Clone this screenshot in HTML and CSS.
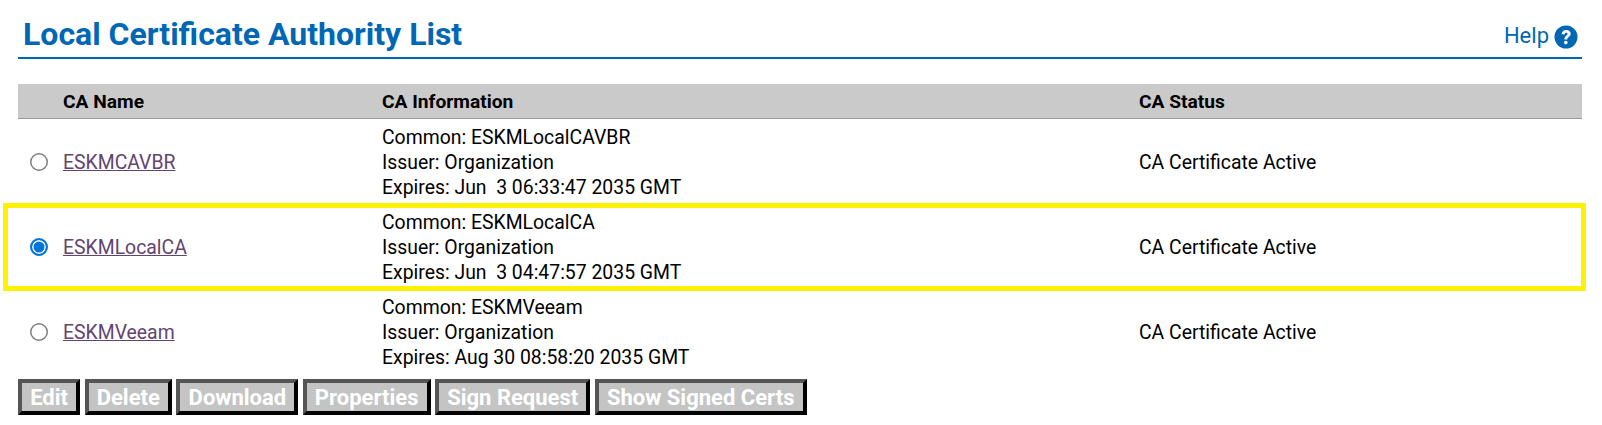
FILE: index.html
```html
<!DOCTYPE html>
<html lang="en">
<head>
    <meta charset="UTF-8">
    <title>Local Certificate Authority List</title>
    <link rel="stylesheet" href="styles.css">
</head>
<body>
    <div class="page-title">
        <h1>Local Certificate Authority List</h1>
        <a class="help-link" href="#">Help
            <svg class="help-icon" viewBox="0 0 24 24" width="24" height="24">
                <circle cx="12" cy="12" r="11.5" fill="#0067b5"/>
                <path d="M7.6 9.2c.2-2.7 2.1-4.2 4.6-4.2 2.6 0 4.5 1.5 4.5 3.8 0 1.8-1 2.6-2.2 3.4-.9.6-1.2 1-1.2 2.2h-2.9c0-1.9.6-2.8 1.8-3.7.9-.7 1.3-1 1.3-1.7 0-.8-.5-1.2-1.3-1.2-.9 0-1.5.6-1.6 1.6z" fill="#fff"/>
                <circle cx="11.8" cy="17.6" r="1.8" fill="#fff"/>
            </svg>
        </a>
    </div>

    <div class="list-wrap">
        <table class="ca-table">
            <thead>
                <tr>
                    <th class="col-radio"></th>
                    <th class="col-name">CA Name</th>
                    <th class="col-info">CA Information</th>
                    <th>CA Status</th>
                </tr>
            </thead>
            <tbody>
                <tr>
                    <td><span class="radio"></span></td>
                    <td><a href="#">ESKMCAVBR</a></td>
                    <td>Common: ESKMLocalCAVBR<br>Issuer: Organization<br>Expires: Jun&nbsp; 3 06:33:47 2035 GMT</td>
                    <td>CA Certificate Active</td>
                </tr>
                <tr>
                    <td><span class="radio selected"></span></td>
                    <td><a href="#">ESKMLocalCA</a></td>
                    <td>Common: ESKMLocalCA<br>Issuer: Organization<br>Expires: Jun&nbsp; 3 04:47:57 2035 GMT</td>
                    <td>CA Certificate Active</td>
                </tr>
                <tr>
                    <td><span class="radio"></span></td>
                    <td><a href="#">ESKMVeeam</a></td>
                    <td>Common: ESKMVeeam<br>Issuer: Organization<br>Expires: Aug 30 08:58:20 2035 GMT</td>
                    <td>CA Certificate Active</td>
                </tr>
            </tbody>
        </table>
        <div class="highlight"></div>
    </div>

    <div class="actions">
        <button disabled>Edit</button>
        <button disabled>Delete</button>
        <button disabled>Download</button>
        <button disabled>Properties</button>
        <button disabled>Sign Request</button>
        <button disabled>Show Signed Certs</button>
    </div>
</body>
</html>
```

FILE: styles.css
```css
body {
    font-family: Roboto, Arial, sans-serif;
    font-size: 19.4px;
    margin: 0;
    padding: 0 20px 0 18px;
    background-color: #fff;
    color: #000;
}
.page-title {
    display: flex;
    justify-content: space-between;
    height: 57px;
    border-bottom: 2px solid #0067b5;
}
.page-title h1 {
    margin: 0;
    padding: 16px 0 0 5px;
    font-size: 32px;
    line-height: 36px;
    font-weight: 700;
    color: #0067b5;
}
.help-link {
    display: flex;
    align-items: center;
    gap: 5px;
    height: 24px;
    margin-top: 23px;
    padding-right: 4px;
    font-size: 22px;
    color: #0067b5;
    text-decoration: none;
}
.help-icon {
    margin-top: 4px;
}
.list-wrap {
    position: relative;
    margin-top: 25px;
}
.ca-table {
    width: 100%;
    table-layout: fixed;
    border-collapse: collapse;
}
.ca-table th {
    height: 34px;
    padding: 0;
    text-align: left;
    font-size: 19.2px;
    font-weight: 700;
    background-color: #cacaca;
    border-bottom: 1px solid #999;
}
.ca-table td {
    height: 84px;
    padding: 1px 0 0;
    line-height: 25px;
}
.col-radio {
    width: 45px;
}
.col-name {
    width: 319px;
}
.col-info {
    width: 757px;
}
.ca-table a {
    color: #624470;
}
.radio {
    display: block;
    box-sizing: border-box;
    width: 18px;
    height: 18px;
    margin-left: 12px;
    border-radius: 50%;
    box-shadow: inset 0 0 0 1.5px #808080;
}
.radio.selected {
    border: 2px solid #0075d9;
    background-color: #0075d9;
    box-shadow: inset 0 0 0 1.5px #fff;
}
.highlight {
    position: absolute;
    top: 119px;
    left: -15px;
    right: -4px;
    height: 88px;
    box-sizing: border-box;
    border: 5px solid #fff200;
    pointer-events: none;
}
.actions {
    display: flex;
    gap: 4.3px;
    margin-top: 5px;
}
.actions button {
    height: 36px;
    padding: 0 8.2px;
    font-family: Roboto, Arial, sans-serif;
    font-size: 22px;
    font-weight: 700;
    color: #fff;
    background-color: #c4c4c4;
    border-style: solid;
    border-width: 4px;
    border-color: #555 #000 #000 #555;
}
```
